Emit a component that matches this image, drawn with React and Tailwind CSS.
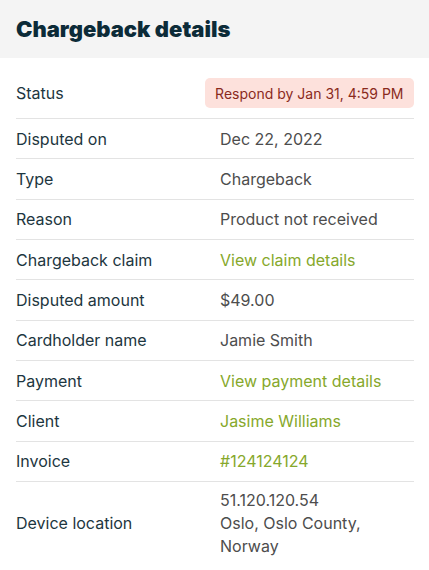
const rows = [
  { label: "Disputed on", value: "Dec 22, 2022" },
  { label: "Type", value: "Chargeback" },
  { label: "Reason", value: "Product not received" },
  { label: "Chargeback claim", value: "View claim details", link: true },
  { label: "Disputed amount", value: "$49.00" },
  { label: "Cardholder name", value: "Jamie Smith" },
  { label: "Payment", value: "View payment details", link: true },
  { label: "Client", value: "Jasime Williams", link: true },
  { label: "Invoice", value: "#124124124", link: true },
];

const App = () => {
  return (
    <div className="w-[429px] min-h-[570px] bg-white font-['Inter',sans-serif]">
      {/* Header */}
      <div className="h-[58px] bg-[#f4f4f4] px-4 flex items-center">
        <h1 className="text-[22px] font-black text-[#0c2b38] leading-none">
          Chargeback details
        </h1>
      </div>

      <div className="pl-4 pr-[15px] pt-[10px]">
        {/* Status */}
        <div className="flex items-center justify-between h-[51px] border-b border-[#e3e3e3]">
          <span className="text-[16px] text-[#1d3640]">Status</span>
          <span className="h-[30px] px-[10.5px] flex items-center rounded-[5px] bg-[#fde1dc] text-[14px] text-[#8a2a1c]">
            Respond by Jan 31, 4:59 PM
          </span>
        </div>

        {rows.map((row) => (
          <div
            key={row.label}
            className="grid grid-cols-[204px_1fr] items-center h-[40.35px] border-b border-[#e3e3e3] text-[16px]"
          >
            <span className="text-[#1d3640]">{row.label}</span>
            <span className={row.link ? "text-[#86a82b]" : "text-[#4d4d4d]"}>
              {row.value}
            </span>
          </div>
        ))}

        {/* Device location */}
        <div className="grid grid-cols-[204px_1fr] items-center py-[7px] text-[16px] leading-[23px]">
          <span className="text-[#1d3640]">Device location</span>
          <div className="text-[#4d4d4d] pr-10">
            <div>51.120.120.54</div>
            <div>Oslo, Oslo County,</div>
            <div>Norway</div>
          </div>
        </div>
      </div>
    </div>
  );
};

export default App;
